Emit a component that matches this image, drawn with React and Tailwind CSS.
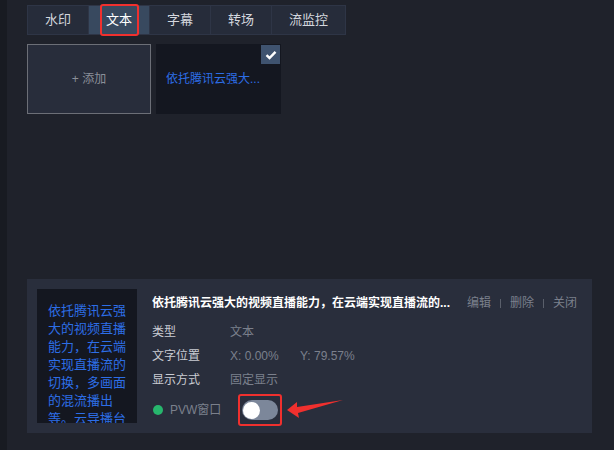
import React from 'react';

const tabs = ['水印', '文本', '字幕', '转场', '流监控'];

const Tabs = () => (
    <div className="flex h-[30px] border border-[#2e3546] bg-[#262c3a]">
        {tabs.map((t, i) => (
            <div
                key={t}
                className={`relative flex items-center justify-center text-[13px] ${i === 4 ? 'w-[73px]' : 'w-[61px]'} ${i < 4 ? 'border-r border-[#2e3546]' : ''} ${i === 1 ? 'bg-[#38495f] text-white' : 'text-[#d4d7de]'}`}
            >
                {t}
                {i === 1 && (
                    <div className="absolute left-[11px] top-[-2px] w-[39px] h-[32px] border-2 border-[#f0302e] rounded-[3px]" />
                )}
            </div>
        ))}
    </div>
);

const Check = () => (
    <svg width="12" height="10" viewBox="0 0 12 10">
        <path d="M1.5 5.2 L4.5 8 L10.5 1.8" stroke="#fff" strokeWidth="2.4" fill="none" />
    </svg>
);

const Row = ({ label, children }) => (
    <div className="flex items-center h-[24px] text-[12px]">
        <span className="w-[78px] text-[#c9ccd3]">{label}</span>
        {children}
    </div>
);

export default function App() {
    return (
        <div
            className="flex w-[614px] h-[450px] bg-[#1f222b] overflow-hidden"
            style={{ fontFamily: '"Liberation Sans", "Noto Sans CJK SC", sans-serif' }}
        >
            <div className="w-[7px] bg-[#181b22]" />
            <div className="flex-1 flex flex-col pl-[20px] pr-[20px]">
                <div className="pt-[5px] w-[319px]">
                    <Tabs />
                </div>

                <div className="flex gap-[5px] mt-[9px]">
                    <div className="w-[124px] h-[70px] border border-[#6c6f77] bg-[#282d3b] flex items-center justify-center text-[12px] text-[#8b8f99]">
                        + 添加
                    </div>
                    <div className="relative w-[125px] h-[70px] bg-[#141720] flex items-center pl-[10px] text-[12px] text-[#2d6ee6]">
                        依托腾讯云强大...
                        <div className="absolute right-[1px] top-[1px] w-[19px] h-[19px] bg-[#3f536f] flex items-center justify-center">
                            <Check />
                        </div>
                    </div>
                </div>

                <div className="mt-[165px] h-[154px] w-[565px] bg-[#292e3c] flex p-[10px]">
                    <div className="w-[100px] h-[134px] bg-[#141720] overflow-hidden pl-[11px] pr-[9px] pt-[13px] text-[13px] leading-[18px] text-[#2d6ee6]">
                        依托腾讯云强大的视频直播能力，在云端实现直播流的切换，多画面的混流播出等。云导播台
                    </div>
                    <div className="flex-1 pl-[15px] pr-[5px]">
                        <div className="flex items-center justify-between h-[28px] text-[12px]">
                            <span className="text-white font-semibold truncate w-[305px]">依托腾讯云强大的视频直播能力，在云端实现直播流的...</span>
                            <div className="flex items-center gap-[9px] text-[#7b808c]">
                                <span>编辑</span>
                                <span className="w-[1px] h-[9px] bg-[#5a5f6b]" />
                                <span>删除</span>
                                <span className="w-[1px] h-[9px] bg-[#5a5f6b]" />
                                <span>关闭</span>
                            </div>
                        </div>
                        <div className="mt-[3px]">
                            <Row label="类型">
                                <span className="text-[#7b808c]">文本</span>
                            </Row>
                            <Row label="文字位置">
                                <span className="w-[70px] text-[#7b808c]">X: 0.00%</span>
                                <span className="text-[#7b808c]">Y: 79.57%</span>
                            </Row>
                            <Row label="显示方式">
                                <span className="text-[#7b808c]">固定显示</span>
                            </Row>
                        </div>
                        <div className="relative flex items-center h-[32px] mt-[2px] text-[12px]">
                            <span className="ml-[1px] w-[10px] h-[10px] rounded-full bg-[#27b66d]" />
                            <span className="ml-[7px] text-[#7b808c]">PVW窗口</span>
                            <div className="relative ml-[21px]">
                                <div className="w-[36px] h-[20px] rounded-full bg-[#7c879a] flex items-center pl-[1px]">
                                    <div className="w-[17px] h-[17px] rounded-full bg-white" />
                                </div>
                                <div className="absolute left-[-4px] top-[-6px] w-[44px] h-[32px] border-2 border-[#f0302e] rounded-[3px]" />
                            </div>
                            <svg className="ml-[9px]" width="58" height="22" viewBox="0 0 58 22">
                                <path d="M0 11 L10 3 L10 8 L56 1 L11 14 L12 19 Z" fill="#f0302e" />
                            </svg>
                        </div>
                    </div>
                </div>
            </div>
        </div>
    );
}
